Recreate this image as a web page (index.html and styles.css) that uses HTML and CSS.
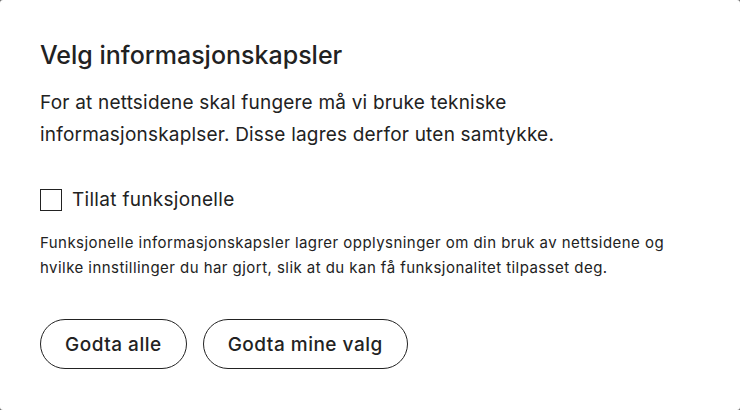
FILE: index.html
```html
<!DOCTYPE html>
<html lang="no">
<head>
<meta charset="utf-8">
<link rel="stylesheet" href="styles.css">
</head>
<body>
<div class="dialog">
  <h1 class="title">Velg informasjonskapsler</h1>
  <p class="intro">For at nettsidene skal fungere må vi bruke tekniske informasjonskaplser. Disse lagres derfor uten samtykke.</p>
  <label class="option">
    <span class="box"></span>
    <span class="option-label">Tillat funksjonelle</span>
  </label>
  <p class="desc">Funksjonelle informasjonskapsler lagrer opplysninger om din bruk av nettsidene og hvilke innstillinger du har gjort, slik at du kan få funksjonalitet tilpasset deg.</p>
  <div class="actions">
    <button class="btn">Godta alle</button>
    <button class="btn">Godta mine valg</button>
  </div>
</div>
</body>
</html>
```

FILE: styles.css
```css
html, body {
  margin: 0;
  padding: 0;
  background: #6b6b6b;
}
body {
  width: 740px;
  height: 410px;
  font-family: Inter, "Liberation Sans", sans-serif;
  color: #222;
}
.dialog {
  box-sizing: border-box;
  width: 740px;
  height: 410px;
  background: #fff;
  border-radius: 3px;
  padding: 39px 40px 0 40px;
}
.title {
  margin: 0;
  font-size: 25px;
  line-height: 32px;
  font-weight: 500;
  letter-spacing: 0;
}
.intro {
  margin: 16px 0 0 0;
  font-size: 19px;
  line-height: 32px;
  letter-spacing: 0.2px;
  width: 560px;
}
.option {
  display: flex;
  align-items: center;
  gap: 10px;
  margin-top: 37px;
  height: 24px;
}
.box {
  box-sizing: border-box;
  width: 22px;
  height: 22px;
  border: 1px solid #222;
  background: #fff;
  flex: none;
}
.option-label {
  font-size: 19px;
  line-height: 24px;
  letter-spacing: 0.3px;
}
.desc {
  margin: 18px 0 0 0;
  font-size: 15px;
  line-height: 25px;
  letter-spacing: 0.45px;
  width: 660px;
}
.actions {
  display: flex;
  gap: 16px;
  margin-top: 39px;
}
.btn {
  height: 50px;
  padding: 0 24px;
  border: 1px solid #222;
  border-radius: 25px;
  background: #fff;
  font-family: inherit;
  font-size: 19px;
  font-weight: 500;
  letter-spacing: 0.5px;
  color: #222;
}
```
